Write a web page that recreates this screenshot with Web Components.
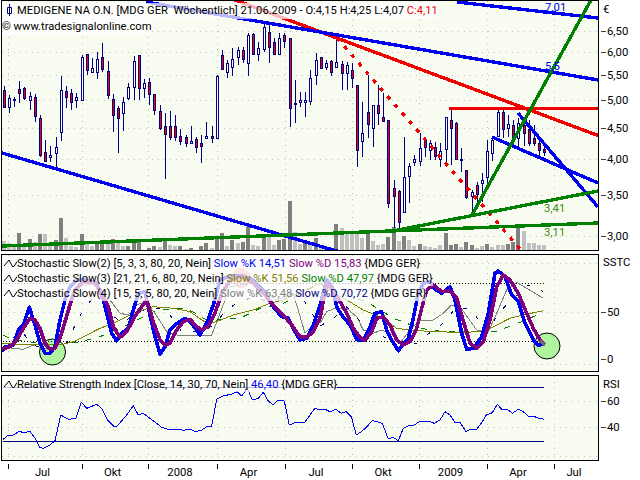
<!DOCTYPE html>
<html>
<head>
<meta charset="utf-8">
<title>MEDIGENE NA O.N.</title>
<style>
  html, body { margin: 0; background: #fff; }
</style>
</head>
<body>
<chart-app></chart-app>
<script>
// --- data, mostly read off the chart in page pixels ---
// [high, low, bodyTop, bodyBottom, red]
const CANDLES = [
  [86,107,90,107,1],[95,113,98,107,0],[97,107,99,100,0],[81,103,89,93,1],[87,100,88,98,1],
  [92,110,96,100,0],[94,122,97,116,1],[115,157,118,155,1],[140,161,152,161,1],[146,162,155,157,0],
  [137,167,147,153,0],[76,141,90,132,0],[86,108,91,97,1],[89,110,93,102,1],[93,108,97,100,0],
  [55,100,57,100,0],[54,75,54,70,1],[58,73,68,72,0],[52,79,59,72,0],[43,72,57,69,1],
  [61,99,71,95,1],[94,132,99,115,1],[106,153,108,118,1],[97,131,102,113,0],[83,100,87,98,0],
  [56,100,61,87,0],[55,100,55,88,1],[79,98,83,88,0],[78,105,82,94,1],[94,115,94,110,1],
  [105,130,111,128,1],[113,179,126,134,1],[111,140,126,137,1],[115,141,126,137,1],[129,145,136,141,1],
  [135,147,137,143,1],[126,143,141,143,0],[137,153,139,147,1],[135,163,143,146,1],[122,138,136,138,0],
  [126,143,136,138,1],[75,138,76,138,0],[50,70,55,69,1],[60,78,63,72,0],[48,76,59,67,0],
  [47,65,50,57,0],[47,63,50,59,1],[33,76,35,63,0],[33,55,34,54,1],[42,61,48,54,0],
  [23,52,27,49,0],[23,63,32,47,1],[38,55,42,54,1],[33,55,38,54,0],[33,48,35,41,1],
  [38,127,38,108,1],[80,123,103,104,0],[92,107,100,102,0],[92,117,100,102,0],[70,105,78,101,0],
  [53,85,60,75,0],[57,68,57,68,1],[60,70,63,67,0],[60,76,61,72,1],[40,68,62,67,0],
  [61,90,64,73,1],[62,90,65,73,0],[63,88,70,78,1],[85,167,85,150,1],[102,157,133,141,0],
  [75,138,112,124,1],[105,147,105,128,0],[85,125,105,113,1],[93,122,117,121,1],[120,208,120,203,1],
  [180,228,188,196,1],[190,228,191,222,1],[137,213,177,212,0],[163,203,166,176,0],[155,166,159,162,0],
  [133,166,148,161,0],[138,157,139,147,1],[140,160,143,150,0],[142,160,147,156,1],[143,167,151,159,0],
  [117,162,117,149,0],[108,165,120,128,1],[122,160,123,159,1],[148,172,159,160,0],[170,199,170,197,1],
  [190,213,192,196,0],[182,205,185,194,1],[173,202,180,183,0],[140,185,151,177,0],[137,161,140,153,0],
  [110,137,112,136,0],[110,138,112,129,1],[115,137,124,128,0],[120,140,125,137,1],[118,148,123,138,0],
  [118,146,125,133,1],[120,146,129,143,1],[125,146,138,143,1],[140,158,143,150,1],[145,156,149,152,1]
];
const candleX = i => Math.round(3.5 + i * 5.2) + 0.5;

// volume tops per candle, 0 = no bar; d/l = dark or light grey
const VOLUME = [
  'l241','l243','l247','d233','l246','d239','l242','d234','l234','l244','d240','d218','l238','l246','l247','d234',
  'l244','l246','d243','d240','l242','d239','l242','l246','d246','d242','d240','0','d248','d246','l247','d241',
  'l245','l246','d246','l249','d248','0','d246','d243','l248','d238','d233','l246','d240','l243','d242','d227',
  'l245','l246','d237','l237','l245','d240','d239','d201','l232','l244','d242','l244','d238','l246','l248','d248',
  'd224','l228','l234','l234','l234','l238','d231','l241','l245','l244','d237','d227','l241','d236','l240','l246',
  'd244','l246','l247','l248','l245','d233','d245','d244','l247','d242','d245','l248','l246','d244','l247','l245',
  'l245','d244','d242','d228','l231','l243','l243','l245','l245'
];

const GRID_X = [8, 82, 148, 217, 285, 352, 419, 487, 554];

// curves were read off 3x crops, so they stay in crop coordinates
const fromCrop = (ox, oy, flat) => {
  const out = [];
  for (let i = 0; i < flat.length; i += 2) out.push((ox + flat[i] / 3).toFixed(1) + ',' + (oy + flat[i + 1] / 3).toFixed(1));
  return out;
};
const curve = (left, right) => [...fromCrop(0, 250, left), ...fromCrop(320, 250, right)].join(' ');

const STOCH = {
  blue: curve(
    [5,305,20,290,40,285,55,240,70,225,88,172,105,225,120,280,135,310,150,310,165,290,180,210,195,150,210,110,230,90,260,90,290,100,310,150,335,250,350,272,365,250,385,235,400,180,415,130,435,125,450,195,465,260,480,312,495,290,510,240,525,225,555,205,575,220,600,255,620,220,640,165,660,90,690,78,730,78,760,90,790,120,820,170,845,200,865,205,885,245,900,270,920,265,940,225,960,165],
    [20,90,35,110,50,170,65,195,90,225,110,268,130,272,150,230,165,190,185,185,200,240,215,270,235,302,250,280,265,265,280,205,295,130,310,100,330,95,345,118,365,130,390,110,405,150,425,250,440,298,460,295,485,260,505,190,525,70,535,63,555,80,575,135,595,155,615,220,640,270,655,285,675,283]),
  purple: curve(
    [5,297,30,290,50,270,70,235,90,205,105,210,120,235,135,280,150,298,165,295,180,265,195,215,210,165,225,120,250,95,280,95,300,120,325,170,340,230,360,262,380,245,410,190,440,150,460,215,480,270,495,285,510,280,530,240,550,215,570,208,590,230,605,240,625,228,645,190,665,130,695,85,730,80,760,100,790,130,820,165,850,195,875,225,900,260,920,262,940,245,960,205],
    [20,100,40,120,60,155,80,190,100,235,120,262,135,270,155,245,170,205,190,200,210,225,230,270,250,285,270,275,290,235,305,175,320,120,340,105,365,125,390,122,410,145,435,230,450,280,470,295,490,275,510,210,530,110,550,75,570,90,595,130,620,190,640,235,660,270,675,285]),
  gray: curve(
    [10,290,40,295,70,298,100,285,130,295,155,300,175,280,195,200,215,130,240,110,280,100,330,150,360,190,385,195,410,165,435,155,465,190,500,245,530,255,600,255,635,255,660,190,690,110,760,100,830,150,880,130,915,250,960,200],
    [0,220,20,185,45,175,80,175,110,200,130,240,160,250,185,240,210,250,240,280,270,240,300,210,340,210,370,190,395,165,420,170,445,205,470,240,505,245,530,190,560,120,590,97,620,115,670,145]),
  navy: curve(
    [5,295,35,270,60,240,100,285,140,300,200,280,235,205,265,160,300,120,335,195,370,220,410,185,480,175,510,195,545,245,610,245,640,225,680,180,710,160,760,140,820,160,880,130,915,155,960,230],
    [0,228,40,205,80,170,140,235,190,260,240,275,290,280,340,240,370,220,410,170,455,180,500,245,540,185,570,155,625,105,670,125]),
  olive: curve(
    [5,280,60,283,180,285,220,275,260,255,300,235,340,220,400,190,460,170,520,175,570,185,620,220,650,215,700,195,760,180,810,160,850,150,960,100],
    [40,130,80,150,130,180,180,200,230,235,270,240,340,245,420,247,490,245,530,225,570,205,610,195,670,182]),
  green: curve(
    [10,255,40,270,170,285,240,275,300,260,380,225,470,180,560,175,620,210,650,210,720,205,780,175,850,160,960,100],
    [50,130,140,155,220,205,300,235,370,245,480,245,525,245,580,225,630,205,670,185])
};

const RSI = [
  ...fromCrop(0, 370, [10,208,22,197,40,195,57,184,72,188,90,184,105,205,120,233,130,235,150,225,165,212,182,135,205,148,228,145,244,97,260,115,290,103,305,115,322,150,340,168,352,168,380,135,400,107,415,135,430,130,450,145,485,172,500,177,530,177,550,181,570,178,587,185,605,180,620,170,635,168,650,88,670,78,695,72,712,65,725,78,742,55,757,90,775,85,790,67,805,93,820,105,835,90,853,93,868,165,885,158,915,156,930,135,945,115,960,120]),
  ...fromCrop(320, 370, [15,118,30,125,48,118,64,130,79,125,94,140,109,195,124,185,141,170,156,152,172,155,187,160,205,207,220,202,235,212,250,175,265,168,283,165,298,155,325,153,343,160,360,150,375,125,390,135,405,158,421,158,438,185,453,177,468,180,484,160,499,135,517,128,532,103,547,120,562,118,577,130,595,118,610,125,625,138,640,138,655,145,673,148])
].join(' ');

// --- svg helpers ---
const line = (x1, y1, x2, y2, color, width = 3.4, extra = '') =>
  `<line x1="${x1}" y1="${y1}" x2="${x2}" y2="${y2}" stroke="${color}" stroke-width="${width}" ${extra}/>`;
const poly = (points, color, width, extra = '') =>
  `<polyline points="${points}" fill="none" stroke="${color}" stroke-width="${width}" stroke-linejoin="round" ${extra}/>`;
const grid = (rows, x1, y1, x2, y2) => {
  const dots = 'stroke-dasharray="1 5" shape-rendering="crispEdges"';
  return GRID_X.map(x => line(x + 0.5, y1, x + 0.5, y2, '#c4c4bc', 1, dots)).join('') +
    rows.map(y => line(x1, y + 0.5, x2, y + 0.5, '#c4c4bc', 1, dots)).join('');
};

// --- a bordered plot area: svg in page coordinates, legend rows slotted over it ---
class PlotPane extends HTMLElement {
  connectedCallback() {
    const top = +this.getAttribute('top');
    const bottom = +this.getAttribute('bottom');
    const height = bottom - top - 1;
    this.attachShadow({ mode: 'open' });
    this.shadowRoot.innerHTML = `
      <style>
        :host { display: block; position: relative; height: ${height}px; border: 1px solid #000; background: #f8fcf0; }
        svg { display: block; width: 596px; height: ${height}px; }
        text { font: 11.3px Roboto, sans-serif; }
        .legend { position: absolute; left: 0; top: 0; padding-top: ${this.getAttribute('pad') || 0}px; }
      </style>
      <svg viewBox="2 ${top + 1} 596 ${height}" shape-rendering="crispEdges">${this.draw(top + 1, bottom)}</svg>
      <div class="legend"><slot></slot></div>`;
  }
  draw() { return ''; }
}

class PricePane extends PlotPane {
  draw(y1, y2) {
    const volume = VOLUME.map((v, i) => {
      if (v === '0') return '';
      const top = +v.slice(1);
      return `<rect x="${Math.round(3.5 + i * 5.2) - 2}" y="${top}" width="4" height="${y2 - top}" fill="${v[0] === 'd' ? '#808080' : '#c0c0c0'}"/>`;
    }).join('');
    const candles = CANDLES.map((c, i) => {
      const x = candleX(i);
      return line(x, c[0], x, c[1], '#000080', 1) +
        `<rect x="${x - 1}" y="${c[2] + 0.5}" width="2" height="${c[3] - c[2]}" fill="${c[4] ? '#f00000' : '#fff'}" stroke="#000080"/>`;
    }).join('');
    return grid([31, 52, 75, 100, 128, 159, 195, 236], 2, y1, 598, y2) + volume + candles +
      line(235, 0, 598, 135.5, '#f00000') +
      line(449, 108.5, 598, 108.5, '#f00000', 3) +
      line(337, 38, 521, 250, '#f00000', 3.4, 'stroke-dasharray="4 7"') +
      line(146, 2, 598, 80, '#0000f0') +
      line(457, 2, 598, 18, '#0000f0') +
      line(2, 153, 340, 252, '#0000f0') +
      line(492, 137, 598, 183, '#0000f0') +
      line(518, 113, 598, 207, '#0000f0') +
      line(2, 246, 598, 223, '#008000') +
      line(393, 231, 598, 191, '#008000') +
      line(472, 215, 591, 0, '#008000') +
      `<text x="545" y="11" fill="#0000f0">7,01</text><text x="545" y="70" fill="#0000f0">5,5</text>` +
      `<text x="544" y="212" fill="#3a8c10">3,41</text><text x="544" y="236" fill="#3a8c10">3,11</text>`;
  }
}

class StochPane extends PlotPane {
  draw(y1, y2) {
    const circle = (x, y, r, fill) => `<circle cx="${x}" cy="${y}" r="${r}" fill="${fill}" stroke="#000" shape-rendering="auto"/>`;
    const dotted = 'stroke-dasharray="1 2"';
    return grid([263, 312, 364], 2, y1, 598, y2) +
      `<circle cx="241" cy="278" r="10" fill="#f4a8a0"/>` +
      circle(52.5, 352, 13, '#b0f4a0') + circle(547, 346, 13, '#b0f4a0') +
      line(3, 341.5, 544, 341.5, '#000', 1, dotted) + line(3, 283.5, 544, 283.5, '#000', 1, dotted) +
      poly(STOCH.gray, '#808080', 1) +
      poly(STOCH.navy, '#000080', 1, 'stroke-dasharray="4 12"') +
      poly(STOCH.green, '#008000', 1, 'stroke-dasharray="6 8"') +
      poly(STOCH.olive, '#808000', 1) +
      poly(STOCH.blue, '#0000f0', 3.6) +
      poly(STOCH.purple, '#800080', 3.6) +
      line(540, 341, 545, 345, '#707070', 3);
  }
}

class RsiPane extends PlotPane {
  draw(y1, y2) {
    return grid([401, 427, 456], 2, y1, 598, y2) +
      line(3, 387.5, 544, 387.5, '#000080', 1) + line(3, 441.5, 544, 441.5, '#000080', 1) +
      poly(RSI, '#0000f0', 1);
  }
}

// one line of legend text, with the little chart symbol in front
class LegendRow extends HTMLElement {
  connectedCallback() {
    const icons = {
      candle: '<path d="M7.5 1V13M5.5 4.5H9.5V10.5H5.5Z" fill="none" stroke="#000080"/>',
      wave: '<path d="M2 10 L7 4 L10.5 10.5 L12 10.5 L15 5.5" fill="none" stroke="#000"/>'
    };
    const icon = icons[this.getAttribute('icon')];
    this.attachShadow({ mode: 'open' });
    this.shadowRoot.innerHTML = `
      <style>
        :host { display: flex; width: fit-content; height: var(--row, 15px); line-height: var(--row, 15px); background: rgba(255,255,255,.72); white-space: pre; }
        svg { width: 15px; height: 15px; flex: none; }
      </style>
      ${icon ? `<svg viewBox="0 0 15 15" shape-rendering="auto">${icon}</svg>` : ''}<div><slot></slot></div>`;
  }
}

// scale labels beside a pane; rows take their height from the gaps between ticks
class PriceAxis extends HTMLElement {
  connectedCallback() {
    const top = +this.getAttribute('top');
    const ticks = JSON.parse(this.getAttribute('ticks'));
    const height = +this.getAttribute('height');
    const title = this.getAttribute('title-text');
    const rows = [];
    let from = 0;
    if (title) {
      const tall = +this.getAttribute('title-height');
      rows.push(`<div class="title" style="height:${tall}px">${title}</div>`);
      from = tall;
    }
    ticks.forEach(([label, y], i) => {
      const at = y - top;
      const half = i + 1 < ticks.length ? (ticks[i + 1][1] - y) / 2 : height - at;
      const before = at - from;
      // keep the label centred on its tick inside a row that is not symmetric
      const pad = before > half ? `padding-top:${before - half}px` : `padding-bottom:${half - before}px`;
      rows.push(`<div class="tick" style="height:${before + half}px;${pad}"><i></i>${label}</div>`);
      from = at + half;
    });
    this.attachShadow({ mode: 'open' });
    this.shadowRoot.innerHTML = `
      <style>
        :host { display: block; height: ${height}px; overflow: hidden; font-size: 11.3px; }
        .title { padding-left: 4px; display: flex; align-items: center; }
        .tick { box-sizing: border-box; display: flex; align-items: center; gap: 1px; padding-left: 2px; }
        i { width: 5px; height: 1px; background: #404040; }
      </style>
      ${rows.join('')}`;
  }
}

class TimeAxis extends HTMLElement {
  connectedCallback() {
    const cells = [['Jul', 74], ['Okt', 66], ['2008', 69], ['Apr', 68], ['Jul', 67], ['Okt', 67], ['2009', 68], ['Apr', 67], ['Jul', 45]];
    this.attachShadow({ mode: 'open' });
    this.shadowRoot.innerHTML = `
      <style>
        :host { display: flex; height: 19px; padding-left: 8px; font-size: 11.3px; }
        div { position: relative; box-sizing: border-box; padding: 6px 5px 0 0; line-height: 12px; text-align: center; }
        i { display: block; position: absolute; left: 0; top: 3px; width: 1px; height: 5px; background: #000; }
      </style>
      ${cells.map(([t, w]) => `<div style="width:${w}px"><i></i>${t}</div>`).join('')}`;
  }
}

class ChartApp extends HTMLElement {
  connectedCallback() {
    const c = (color, text) => `<span style="color:${color}">${text}</span>`;
    this.attachShadow({ mode: 'open' });
    this.shadowRoot.innerHTML = `
      <style>
        :host { display: grid; grid-template-columns: 599px 41px; grid-template-rows: 251px 118px 86px 19px; row-gap: 3px; align-content: start; width: 640px; height: 480px; overflow: hidden; font: 11.2px/15px Roboto, sans-serif; color: #000; }
        price-pane, stoch-pane, rsi-pane { margin-left: 1px; }
        time-axis { grid-column: 1 / 3; margin-top: -3px; }
        .small { --row: 16px; }
      </style>
      <price-pane top="0" bottom="250" pad="2">
        <legend-row class="small" icon="candle">MEDIGENE NA O.N. [MDG GER  Wöchentlich] 21.06.2009 - O:4,15 H:4,25 L:4,07 ${c('#f00000', 'C:4,11')}</legend-row>
        <legend-row class="small">© www.tradesignalonline.com</legend-row>
      </price-pane>
      <price-axis top="0" height="251" title-text="€" title-height="19" ticks='[["6,50",31],["6,00",52],["5,50",75],["5,00",100],["4,50",128],["4,00",159],["3,50",195],["3,00",236]]'></price-axis>

      <stoch-pane top="254" bottom="371" pad="1">
        <legend-row icon="wave">Stochastic Slow(2) [5, 3, 3, 80, 20, Nein] ${c('#0000f0', 'Slow %K 14,51')} ${c('#800080', 'Slow %D 15,83')} {MDG GER}</legend-row>
        <legend-row icon="wave">Stochastic Slow(3) [21, 21, 6, 80, 20, Nein] ${c('#808000', 'Slow %K 51,56')} ${c('#008000', 'Slow %D 47,97')} {MDG GER}</legend-row>
        <legend-row icon="wave">Stochastic Slow(4) [15, 5, 5, 80, 20, Nein] ${c('#808080', 'Slow %K 63,48')} ${c('#000080', 'Slow %D 70,72')} {MDG GER}</legend-row>
      </stoch-pane>
      <price-axis top="254" height="118" title-text="SSTC" title-height="17" ticks='[["50",312],["0",359]]'></price-axis>

      <rsi-pane top="375" bottom="460" pad="1">
        <legend-row icon="wave">Relative Strength Index [Close, 14, 30, 70, Nein] ${c('#0000f0', '46,40')} {MDG GER}</legend-row>
      </rsi-pane>
      <price-axis top="375" height="86" title-text="RSI" title-height="18" ticks='[["60",401],["40",427]]'></price-axis>

      <time-axis></time-axis>`;
  }
}

customElements.define('price-pane', PricePane);
customElements.define('stoch-pane', StochPane);
customElements.define('rsi-pane', RsiPane);
customElements.define('legend-row', LegendRow);
customElements.define('price-axis', PriceAxis);
customElements.define('time-axis', TimeAxis);
customElements.define('chart-app', ChartApp);
</script>
</body>
</html>
